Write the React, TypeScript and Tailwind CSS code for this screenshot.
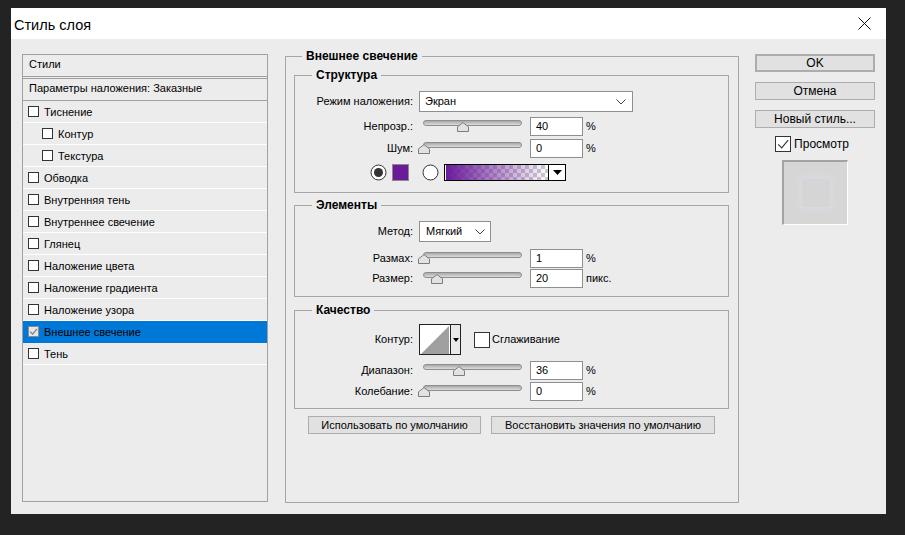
import React from "react";

function Check({ checked = false, sel = false, size = 11 }: { checked?: boolean; sel?: boolean; size?: number }) {
  return (
    <svg width={size} height={size} viewBox={`0 0 ${size} ${size}`} className="shrink-0">
      <rect x="0.5" y="0.5" width={size - 1} height={size - 1} fill={sel ? "#e6e6e6" : "#ffffff"} stroke={sel ? "#8a8a8a" : "#333333"} />
      {checked && (
        <path
          d={`M${size * 0.2} ${size * 0.52} L${size * 0.42} ${size * 0.74} L${size * 0.82} ${size * 0.26}`}
          fill="none"
          stroke={sel ? "#7a7a7a" : "#333333"}
          strokeWidth="1.1"
        />
      )}
    </svg>
  );
}

function Chevron() {
  return (
    <svg width="10" height="6" viewBox="0 0 10 6" className="shrink-0">
      <path d="M0.5 0.5 L5 5 L9.5 0.5" fill="none" stroke="#444" strokeWidth="1" />
    </svg>
  );
}

function Slider({ pos }: { pos: number }) {
  return (
    <div className="relative w-[104px] h-[19px] shrink-0">
      <div className="absolute left-[4px] top-[3px] w-[99px] h-[6px] rounded-full border border-[#8e8e8e] bg-gradient-to-b from-[#a9a9a9] to-[#dcdcdc]" />
      <svg className="absolute top-[5px]" style={{ left: pos - 6 }} width="12" height="10" viewBox="0 0 12 10">
        <path d="M0.5 9.5 V4.8 L6 0.6 L11.5 4.8 V9.5 Z" fill="#e2e2e2" stroke="#7d7d7d" />
      </svg>
    </div>
  );
}

function NumField({ value, unit }: { value: string; unit: string }) {
  return (
    <>
      <div className="ml-[7px] w-[53px] h-[19px] bg-white border border-[#8f8f8f] pl-[5px] flex items-center text-[11px] leading-[13px]">
        {value}
      </div>
      <span className="ml-[3px] text-[11px] leading-[13px]">{unit}</span>
    </>
  );
}

function Label({ children }: { children: React.ReactNode }) {
  return <div className="w-[118px] shrink-0 text-right text-[11px] leading-[13px]">{children}</div>;
}

function SliderRow({ label, pos, value, unit, className = "" }: { label: string; pos: number; value: string; unit: string; className?: string }) {
  return (
    <div className={`flex items-center h-[19px] ${className}`}>
      <Label>{label}</Label>
      <div className="ml-[6px]">
        <Slider pos={pos} />
      </div>
      <NumField value={value} unit={unit} />
    </div>
  );
}

function Group({ title, className = "", titleLeft = "left-[17px]", children }: { title: string; className?: string; titleLeft?: string; children?: React.ReactNode }) {
  return (
    <div className={`relative border border-[#a6a6a6] ${className}`}>
      <span className={`absolute -top-[9px] ${titleLeft} px-[4px] bg-[#ececec] font-bold text-[12px] leading-[16px]`}>{title}</span>
      {children}
    </div>
  );
}

function GradientSwatch() {
  return (
    <div className="ml-[5px] flex h-[17px] w-[122px] border border-black bg-white">
      <svg width="103" height="15" viewBox="0 0 103 15" className="shrink-0">
        <defs>
          <pattern id="chk" width="8" height="8" patternUnits="userSpaceOnUse">
            <rect width="8" height="8" fill="#ffffff" />
            <rect width="4" height="4" fill="#cccccc" />
            <rect x="4" y="4" width="4" height="4" fill="#cccccc" />
          </pattern>
          <linearGradient id="pg" x1="0" x2="1" y1="0" y2="0">
            <stop offset="0" stopColor="#6a1b9a" stopOpacity="1" />
            <stop offset="1" stopColor="#6a1b9a" stopOpacity="0" />
          </linearGradient>
        </defs>
        <rect x="1" width="102" height="15" fill="url(#chk)" />
        <rect x="1" width="102" height="15" fill="url(#pg)" />
      </svg>
      <div className="w-[17px] border-l border-black bg-white flex items-center justify-center">
        <svg width="9" height="5" viewBox="0 0 9 5">
          <path d="M0 0 H9 L4.5 5 Z" fill="#000" />
        </svg>
      </div>
    </div>
  );
}

function Radio({ on = false }: { on?: boolean }) {
  return (
    <svg width="17" height="17" viewBox="0 0 17 17" className="shrink-0">
      <circle cx="8.5" cy="8.5" r="7.5" fill="#ffffff" stroke="#333" strokeWidth="1" />
      {on && <circle cx="8.5" cy="8.5" r="4.5" fill="#333" />}
    </svg>
  );
}

function ContourBox() {
  return (
    <div className="ml-[6px] flex w-[42px] h-[31px] border border-[#222] bg-white">
      <svg width="30" height="29" viewBox="0 0 30 29" className="shrink-0">
        <path d="M1 29 L29 1 V29 Z" fill="#a0a0a0" />
      </svg>
      <div className="flex-1 border-l border-[#222] bg-[#e9e9e9] flex items-center justify-center">
        <svg width="6" height="4" viewBox="0 0 6 4">
          <path d="M0 0 H6 L3 4 Z" fill="#000" />
        </svg>
      </div>
    </div>
  );
}

function Btn({ children, className = "" }: { children: React.ReactNode; className?: string }) {
  return (
    <div className={`h-[18px] bg-[#e1e1e1] border border-[#adadad] flex items-center justify-center leading-[14px] ${className}`}>
      {children}
    </div>
  );
}

const items: { t: string; indent?: boolean; sel?: boolean }[] = [
  { t: "Тиснение" },
  { t: "Контур", indent: true },
  { t: "Текстура", indent: true },
  { t: "Обводка" },
  { t: "Внутренняя тень" },
  { t: "Внутреннее свечение" },
  { t: "Глянец" },
  { t: "Наложение цвета" },
  { t: "Наложение градиента" },
  { t: "Наложение узора" },
  { t: "Внешнее свечение", sel: true },
  { t: "Тень" },
];

export default function App() {
  return (
    <div className="w-[905px] h-[535px] bg-[#232323] pt-[8px] pl-[11px] font-['Liberation_Sans',Arial,sans-serif] text-black overflow-hidden">
      <div className="w-[875px] h-[506px] bg-[#ececec] flex flex-col">
        {/* title bar */}
        <div className="h-[31px] bg-white flex items-center justify-between pl-[3px] pr-[15px] shrink-0">
          <span className="text-[14.5px] leading-[18px] mt-[2px]">Стиль слоя</span>
          <svg width="13" height="13" viewBox="0 0 13 13">
            <path d="M0.5 0.5 L12.5 12.5 M12.5 0.5 L0.5 12.5" stroke="#111" strokeWidth="1" />
          </svg>
        </div>

        <div className="flex pt-[15px] pl-[11px]">
          {/* left list */}
          <div className="w-[246px] h-[448px] border border-[#a0a0a0] text-[11px] leading-[14px] shrink-0">
            <div className="h-[22px] border-b border-[#a0a0a0] pl-[6px] pt-[2px]">Стили</div>
            <div className="h-[2px] border-b border-[#a0a0a0]" />
            <div className="h-[22px] border-b border-[#a0a0a0] pl-[6px] pt-[2px]">Параметры наложения: Заказные</div>
            {items.map((it) => (
              <div
                key={it.t}
                className={`h-[22px] border-b flex items-center ${it.sel ? "bg-[#0078d7] border-[#0078d7]" : "border-white"} ${it.indent ? "pl-[19px]" : "pl-[5px]"}`}
              >
                <Check checked={!!it.sel} sel={!!it.sel} />
                <span className="ml-[5px]">{it.t}</span>
              </div>
            ))}
          </div>

          {/* main group */}
          <Group title="Внешнее свечение" titleLeft="left-[16px]" className="ml-[17px] mt-[2px] w-[454px] h-[447px] shrink-0 px-[8px] pt-[18px]">
            <Group title="Структура" className="w-[435px] h-[118px] pt-[15px]">
              <div className="flex items-center h-[21px]">
                <Label>Режим наложения:</Label>
                <div className="ml-[6px] w-[214px] h-[21px] bg-white border border-[#8f8f8f] flex items-center justify-between pl-[5px] pr-[6px] text-[11px]">
                  <span>Экран</span>
                  <Chevron />
                </div>
              </div>
              <SliderRow className="mt-[5px]" label="Непрозр.:" pos={44} value="40" unit="%" />
              <SliderRow className="mt-[3px]" label="Шум:" pos={5} value="0" unit="%" />
              <div className="mt-[6px] h-[17px] flex items-center pl-[75px]">
                <Radio on />
                <div className="ml-[5px] w-[17px] h-[17px] bg-[#6a1b9a] border border-[#8a8a8a]" />
                <div className="ml-[13px]">
                  <Radio />
                </div>
                <GradientSwatch />
              </div>
            </Group>

            <Group title="Элементы" className="mt-[12px] w-[435px] h-[92px] pt-[15px]">
              <div className="flex items-center h-[21px]">
                <Label>Метод:</Label>
                <div className="ml-[6px] w-[72px] h-[21px] bg-white border border-[#8f8f8f] flex items-center justify-between pl-[6px] pr-[5px] text-[11px]">
                  <span>Мягкий</span>
                  <Chevron />
                </div>
              </div>
              <SliderRow className="mt-[7px]" label="Размах:" pos={5} value="1" unit="%" />
              <SliderRow className="mt-[1px]" label="Размер:" pos={18} value="20" unit="пикс." />
            </Group>

            <Group title="Качество" className="mt-[13px] w-[435px] h-[99px] pt-[13px]">
              <div className="flex items-center h-[31px]">
                <Label>Контур:</Label>
                <ContourBox />
                <div className="ml-[13px]">
                  <Check size={16} />
                </div>
                <span className="ml-[2px] text-[11px]">Сглаживание</span>
              </div>
              <SliderRow className="mt-[6px]" label="Диапазон:" pos={40} value="36" unit="%" />
              <SliderRow className="mt-[2px]" label="Колебание:" pos={5} value="0" unit="%" />
            </Group>

            <div className="mt-[7px] flex pl-[14px]">
              <Btn className="w-[173px] text-[11px]">Использовать по умолчанию</Btn>
              <Btn className="ml-[10px] w-[224px] text-[11px]">Восстановить значения по умолчанию</Btn>
            </div>
          </Group>

          {/* right column */}
          <div className="ml-[16px] w-[120px] flex flex-col items-center shrink-0">
            <Btn className="w-[120px] border-2 border-[#0078d7] text-[12px]">OK</Btn>
            <Btn className="w-[120px] mt-[10px] text-[12px]">Отмена</Btn>
            <Btn className="w-[120px] mt-[10px] text-[12px]">Новый стиль...</Btn>
            <div className="mt-[8px] flex items-center h-[16px] -ml-[6px]">
              <Check checked size={16} />
              <span className="ml-[3px] text-[12px]">Просмотр</span>
            </div>
            <div className="mt-[8px] w-[66px] h-[65px] border-t-2 border-l-2 border-[#a3a3a3] border-b border-r border-b-white border-r-white bg-[#d6d6d6] flex items-center justify-center">
              <svg width="48" height="46" viewBox="0 0 48 46">
                <defs>
                  <filter id="gl" x="-30%" y="-30%" width="160%" height="160%">
                    <feGaussianBlur stdDeviation="2.5" />
                  </filter>
                </defs>
                <rect x="7" y="6" width="34" height="34" fill="#ddd8e2" filter="url(#gl)" />
                <rect x="10" y="9" width="28" height="28" fill="#d5d5d5" />
              </svg>
            </div>
          </div>
        </div>
      </div>
    </div>
  );
}
